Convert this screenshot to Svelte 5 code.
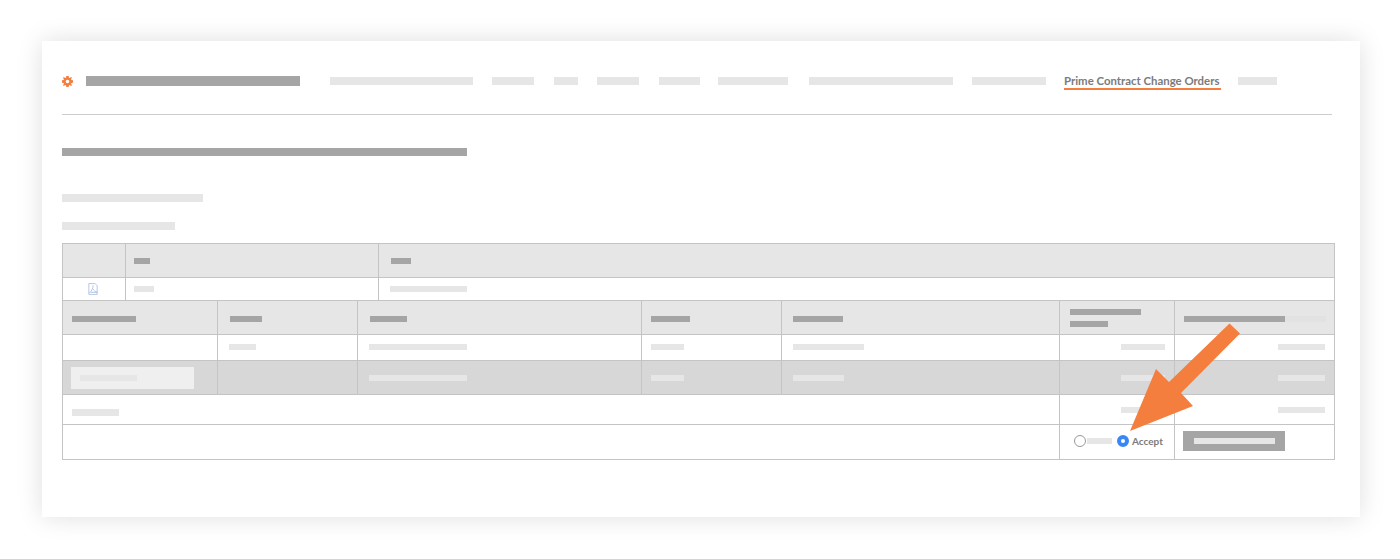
<script lang="ts">
  // Widths and left margins of the nav placeholders, left to right.
  const navBefore = [
    { w: 143, ml: 30 },
    { w: 42, ml: 19 },
    { w: 24, ml: 20 },
    { w: 42, ml: 19 },
    { w: 41, ml: 20 },
    { w: 70, ml: 18 },
    { w: 144, ml: 21 },
    { w: 74, ml: 19 },
  ];

  const headPad = [9, 12, 12, 9, 11];
  const headBars = [64, 32, 37, 39, 50];
  const bodyPad = [0, 11, 11, 9, 11];
  const rowBars = [0, 27, 98, 33, 71];
  const darkBars = [0, 0, 98, 33, 51];
</script>

<div class="card">
  <nav class="nav">
    <svg class="gear" viewBox="0 0 24 24" aria-hidden="true">
      <path
        fill-rule="evenodd"
        d="M9.500 0h5l.7 3.400 1.900.8L20 2.300 21.700 4l-1.900 2.900.8 1.900L24 9.500v5l-3.400.7-.8 1.900 1.900 2.900L20 21.700l-2.900-1.900-1.900.8-.7 3.400h-5l-.7-3.400-1.900-.8L4 21.700 2.300 20l1.900-2.900-.8-1.900L0 14.500v-5l3.400-.7.8-1.900L2.300 4 4 2.300l2.900 1.900 1.900-.8zM12 8a4 4 0 1 0 0 8 4 4 0 0 0 0-8z"
      />
    </svg>
    <span class="bar dark brand"></span>
    {#each navBefore as item}
      <span class="bar light nav-item" style="width:{item.w}px;margin-left:{item.ml}px"></span>
    {/each}
    <span class="tab">Prime Contract Change Orders</span>
    <span class="bar light nav-item last"></span>
  </nav>

  <div class="divider"></div>

  <div class="bar dark heading"></div>
  <div class="bar light meta-a"></div>
  <div class="bar light meta-b"></div>

  <div class="table">
    <div class="row top head">
      <div class="cell"></div>
      <div class="cell" style="padding-left:8px"><span class="bar dark thin" style="width:16px"></span></div>
      <div class="cell" style="padding-left:12px"><span class="bar dark thin" style="width:20px"></span></div>
    </div>
    <div class="row top file">
      <div class="cell center">
        <svg class="pdf" viewBox="0 0 12 14" aria-hidden="true">
          <path d="M1 .5h7.500L11 3v10.500H1z M6 2.500c.4 3-1.500 7-4.500 9.500 M6 7c1 2 3 3.500 5 3.800 M3 11h8" />
        </svg>
      </div>
      <div class="cell" style="padding-left:8px"><span class="bar light thin" style="width:20px"></span></div>
      <div class="cell" style="padding-left:11px"><span class="bar light thin" style="width:77px"></span></div>
    </div>

    <div class="row cols head">
      {#each headBars as w, i}
        <div class="cell" style="padding-left:{headPad[i]}px"><span class="bar dark thin" style="width:{w}px"></span></div>
      {/each}
      <div class="cell stack">
        <span class="bar dark thin" style="width:71px"></span>
        <span class="bar dark thin" style="width:38px"></span>
      </div>
      <div class="cell last-head">
        <span class="bar dark thin" style="width:101px"></span>
        <span class="bar light thin faint" style="width:41px"></span>
      </div>
    </div>

    <div class="row cols line">
      {#each rowBars as w, i}
        <div class="cell" style="padding-left:{bodyPad[i]}px">
          {#if w}<span class="bar light thin" style="width:{w}px"></span>{/if}
        </div>
      {/each}
      <div class="cell right"><span class="bar light thin" style="width:44px"></span></div>
      <div class="cell right"><span class="bar light thin" style="width:47px"></span></div>
    </div>

    <div class="row cols selected">
      <div class="cell">
        <div class="select"><span class="bar light thin" style="width:57px"></span></div>
      </div>
      {#each darkBars.slice(1) as w, i}
        <div class="cell" style="padding-left:{bodyPad[i + 1]}px">
          {#if w}<span class="bar light thin" style="width:{w}px"></span>{/if}
        </div>
      {/each}
      <div class="cell right"><span class="bar light thin" style="width:44px"></span></div>
      <div class="cell right"><span class="bar light thin" style="width:47px"></span></div>
    </div>

    <div class="row foot total">
      <div class="cell first"><span class="bar light total-bar"></span></div>
      <div class="cell right"><span class="bar light thin" style="width:44px"></span></div>
      <div class="cell right"><span class="bar light thin" style="width:47px"></span></div>
    </div>

    <div class="row foot action">
      <div class="cell"></div>
      <div class="cell radios">
        <span class="radio"></span>
        <span class="bar light radio-label"></span>
        <span class="radio on"></span>
        <span class="accept">Accept</span>
      </div>
      <div class="cell submit-cell">
        <button type="button" class="submit"><span class="bar light submit-label"></span></button>
      </div>
    </div>
  </div>

  <svg class="arrow" viewBox="42 41 1318 476" aria-hidden="true">
    <polygon points="1229.500,323.500 1240,333.500 1181,393 1193,406 1130,431 1156,369 1169,382" />
  </svg>
</div>

<style>
  :global(body) {
    margin: 0;
    padding: 41px 0 42px 42px;
    background: #fff;
    font-family: Lato, 'Liberation Sans', sans-serif;
  }

  .card {
    position: relative;
    box-sizing: border-box;
    width: 1318px;
    height: 476px;
    padding: 28px 25px 0 20px;
    background: #fff;
    box-shadow: 0 0 24px rgba(0, 0, 0, 0.13);
  }

  .bar {
    display: block;
    flex: none;
  }

  .dark {
    background: #a5a5a5;
  }

  .light {
    background: #e6e6e6;
  }

  .thin {
    height: 6px;
  }

  .nav {
    display: flex;
    align-items: center;
    height: 24px;
  }

  .gear {
    width: 11px;
    height: 11px;
    fill: #f47e3e;
    flex: none;
  }

  .brand {
    width: 214px;
    height: 10px;
    margin-left: 13px;
  }

  .nav-item {
    height: 8px;
  }

  .nav-item.last {
    width: 39px;
    margin-left: 17px;
  }

  .tab {
    box-sizing: border-box;
    display: block;
    width: 157px;
    height: 18px;
    margin-left: 18px;
    border-bottom: 2px solid #f47e3e;
    color: #7b7b7b;
    font-size: 11.400px;
    font-weight: 700;
    line-height: 18px;
    white-space: nowrap;
  }

  .divider {
    height: 1px;
    margin: 21px 3px 0 0;
    background: #cdcdcd;
  }

  .heading {
    width: 405px;
    height: 8px;
    margin-top: 33px;
  }

  .meta-a {
    width: 141px;
    height: 8px;
    margin-top: 38px;
  }

  .meta-b {
    width: 113px;
    height: 8px;
    margin-top: 20px;
  }

  .table {
    box-sizing: border-box;
    width: 1273px;
    height: 217px;
    margin-top: 13px;
    border: 1px solid #c4c4c4;
  }

  .row {
    display: grid;
    box-sizing: border-box;
    border-bottom: 1px solid #c4c4c4;
  }

  .row:last-child {
    border-bottom: none;
  }

  .top {
    grid-template-columns: 63px 253px 1fr;
  }

  .cols {
    grid-template-columns: 155px 140px 284px 140px 278px 115px 1fr;
  }

  .foot {
    grid-template-columns: 997px 115px 1fr;
  }

  .head {
    height: 34px;
    background: #e6e6e6;
  }

  .cols.head .cell:not(.stack) {
    padding-top: 2px;
  }

  .file {
    height: 23px;
  }

  .file .cell {
    padding-bottom: 1px;
  }

  .line {
    height: 26px;
  }

  .line .cell {
    padding-bottom: 2px;
  }

  .selected {
    height: 34px;
    background: #d7d7d7;
  }

  .selected .cell {
    padding-top: 1px;
  }

  .selected .cell:first-child {
    padding-top: 0;
  }

  .total {
    height: 30px;
  }

  .action {
    height: 34px;
  }

  .action .cell {
    padding-bottom: 2px;
  }

  .cell {
    box-sizing: border-box;
    display: flex;
    align-items: center;
    min-width: 0;
    border-right: 1px solid #c4c4c4;
  }

  .cell:last-child {
    border-right: none;
  }

  .center {
    justify-content: center;
    padding-right: 3px;
  }

  .stack {
    flex-direction: column;
    align-items: flex-start;
    justify-content: center;
    gap: 6px;
    padding-left: 10px;
  }

  .last-head {
    padding-left: 9px;
  }

  .faint {
    background: #e2e2e2;
  }

  .right {
    justify-content: flex-end;
    padding-right: 9px;
  }

  .pdf {
    width: 10px;
    height: 12px;
    fill: none;
    stroke: #9fb5dc;
    stroke-width: 0.9;
  }

  .select {
    display: flex;
    align-items: center;
    box-sizing: border-box;
    width: 123px;
    height: 22px;
    margin-left: 8px;
    padding-left: 9px;
    background: #efefef;
  }

  .first {
    padding-left: 9px;
    padding-top: 6px;
  }

  .total-bar {
    width: 47px;
    height: 7px;
  }

  .radios {
    padding-left: 14px;
  }

  .radio {
    box-sizing: border-box;
    width: 12px;
    height: 12px;
    flex: none;
    border: 1.500px solid #999;
    border-radius: 50%;
    background: #fff;
  }

  .radio.on {
    margin-left: 5px;
    border: 4px solid #3b86f7;
  }

  .radio-label {
    width: 25px;
    height: 6px;
    margin-left: 1px;
  }

  .accept {
    margin-left: 3px;
    color: #7b7b7b;
    font-size: 10px;
    font-weight: 700;
    white-space: nowrap;
  }

  .submit-cell {
    padding-left: 8px;
  }

  .submit {
    display: flex;
    align-items: center;
    justify-content: center;
    width: 102px;
    height: 20px;
    padding: 0;
    border: none;
    background: #a5a5a5;
  }

  .submit-label {
    width: 81px;
    height: 6px;
  }

  .arrow {
    position: absolute;
    left: 0;
    top: 0;
    width: 1318px;
    height: 476px;
    fill: #f47e3e;
    pointer-events: none;
  }
</style>
